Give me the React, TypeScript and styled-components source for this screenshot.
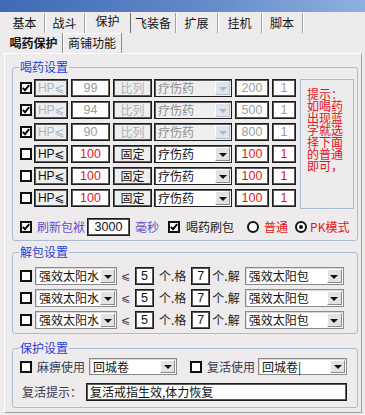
import React from 'react';
import styled, { createGlobalStyle } from 'styled-components';

const GlobalStyle = createGlobalStyle`
  html, body { margin: 0; padding: 0; background: #edebeb; }
  body {
    font-family: "Noto Sans CJK SC", "DejaVu Sans", sans-serif;
    font-size: 12px;
    color: #141414;
  }
`;

const RED = '#e3141c';
const BLUE = '#2441d6';
const PURPLE = '#6a4ccc';

const Window = styled.div`
  width: 365px;
  height: 415px;
  background: #edebeb;
  display: flex;
  flex-direction: column;
  overflow: hidden;
`;

const TitleBar = styled.div`
  height: 12px;
  flex: none;
  background: linear-gradient(90deg, #3f69b4 0%, #6389c8 55%, #8eb0e0 100%);
`;

const TabStrip = styled.div`
  display: flex;
  height: 20px;
  padding: 1px 0 0 5px;
`;

const Tab = styled.div<{ $w: number; $active?: boolean }>`
  width: ${p => p.$w}px;
  box-sizing: border-box;
  display: flex;
  align-items: center;
  justify-content: center;
  line-height: 14px;
  padding-bottom: ${p => (p.$active ? 4 : 0)}px;
  border-right: 1px solid ${p => (p.$active ? '#6e6e6e' : '#a3a3a3')};
  box-shadow: ${p => (p.$active ? 'inset 1px 0 0 #fff' : '1px 0 0 #fff')};
`;

const SubTabStrip = styled.div`
  display: flex;
  height: 20px;
  padding: 0 0 0 5px;
`;

const SubTab = styled(Tab)`
  font-weight: ${p => (p.$active ? 600 : 400)};
  padding-bottom: 0;
  border-right: 1px solid #8d8d8d;
  box-shadow: ${p => (p.$active ? 'none' : 'inset 1px 1px 0 #fff')};
`;

const Page = styled.div`
  flex: 1;
  margin: 0 3px 2px 4px;
  border-top: 1px solid #fff;
  border-left: 1px solid #fff;
  border-right: 1px solid #a0a0a0;
  border-bottom: 1px solid #a0a0a0;
  display: flex;
  flex-direction: column;
`;

const Group = styled.fieldset<{ $top: number; $pt: number; $pb: number }>`
  margin: ${p => p.$top}px 3px 0 7px;
  padding: ${p => p.$pt}px 3px ${p => p.$pb}px 7px;
  border: 1px solid #a9bcd2;
  border-radius: 3px;
  min-width: 0;
`;

const Legend = styled.legend`
  padding: 0 1px;
  margin-left: -1px;
  font-size: 12px;
  line-height: 16px;
  color: ${BLUE};
`;

const DrinkBody = styled.div`
  display: flex;
  gap: 4px;
`;

const RowStack = styled.div`
  display: flex;
  flex-direction: column;
  gap: 4px;
`;

const Row = styled.div<{ $h?: number }>`
  display: flex;
  align-items: center;
  height: ${p => p.$h ?? 18}px;
`;

const Box = styled.div`
  width: 12px;
  height: 12px;
  box-sizing: border-box;
  border: 2px solid #111;
  background: #fff;
  flex: none;
  display: flex;
  align-items: center;
  justify-content: center;
`;

const Check = ({ on }: { on?: boolean }) => (
  <Box>
    {on && (
      <svg width="8" height="8" viewBox="0 0 8 8">
        <path d="M0.8 3.8 L3 6.2 L7.2 1.2" fill="none" stroke="#000" strokeWidth="1.9" />
      </svg>
    )}
  </Box>
);

const Radio = styled.span<{ $on?: boolean }>`
  width: 12px;
  height: 12px;
  box-sizing: border-box;
  border: 2px solid #111;
  border-radius: 50%;
  background: #fff;
  flex: none;
  display: inline-flex;
  align-items: center;
  justify-content: center;
  &::after {
    content: '';
    width: 4px;
    height: 4px;
    border-radius: 50%;
    background: ${p => (p.$on ? '#111' : 'transparent')};
  }
`;

const Field = styled.div<{ $w: number; $ml?: number; $color?: string; $grey?: boolean; $align?: string }>`
  width: ${p => p.$w}px;
  height: 100%;
  margin-left: ${p => p.$ml ?? 0}px;
  box-sizing: border-box;
  flex: none;
  border: 1px solid #1c1c1c;
  box-shadow: inset 0 0 0 1px #5a5a5a;
  background: ${p => (p.$grey ? '#efeeee' : '#fff')};
  color: ${p => p.$color ?? '#111'};
  display: flex;
  align-items: center;
  justify-content: ${p => p.$align ?? 'center'};
  padding: 0 3px;
  line-height: 14px;
  white-space: nowrap;
  font-family: "Liberation Sans", "Noto Sans CJK SC", sans-serif;
  font-size: 12.5px;
`;

const FieldCjk = styled.span`
  font-family: "Noto Sans CJK SC", sans-serif;
  font-size: 12px;
`;

const HpText = styled.span`
  font-family: "Liberation Sans", "DejaVu Sans", sans-serif;
  font-size: 12px;
  letter-spacing: -0.3px;
`;

const Combo = styled.div<{ $w: number; $ml?: number; $off?: boolean; $thick?: boolean }>`
  width: ${p => p.$w}px;
  height: 100%;
  margin-left: ${p => p.$ml ?? 0}px;
  box-sizing: border-box;
  flex: none;
  display: flex;
  align-items: stretch;
  border: 1px solid ${p => (p.$thick ? '#1c1c1c' : '#8a8a8a')};
  box-shadow: ${p => (p.$thick ? 'inset 1px 1px 0 #5a5a5a' : 'inset 1px 1px 0 #d8d8d8')};
  background: ${p => (p.$off ? '#efefef' : '#fff')};
  color: ${p => (p.$off ? '#8e8e8e' : '#111')};
`;

const ComboText = styled.span`
  flex: 1;
  display: flex;
  align-items: center;
  padding-left: 3px;
  line-height: 12px;
  white-space: nowrap;
`;

const ComboBtn = styled.span<{ $off?: boolean }>`
  width: 15px;
  margin: 1px 1px 1px 0;
  flex: none;
  box-sizing: border-box;
  background: ${p => (p.$off ? '#dfe5ec' : '#e2e2e2')};
  border-top: 1px solid #fff;
  border-left: 1px solid #fff;
  border-right: 1px solid ${p => (p.$off ? '#b8c2ce' : '#8a8a8a')};
  border-bottom: 1px solid ${p => (p.$off ? '#b8c2ce' : '#8a8a8a')};
  display: flex;
  align-items: center;
  justify-content: center;
  &::after {
    content: '';
    border-left: 4px solid transparent;
    border-right: 4px solid transparent;
    border-top: 4px solid ${p => (p.$off ? '#a9b7c8' : '#111')};
    margin-top: 1px;
  }
`;

const Label = styled.span<{ $ml?: number; $color?: string }>`
  margin-left: ${p => p.$ml ?? 0}px;
  color: ${p => p.$color ?? '#222'};
  flex: none;
  display: inline-flex;
  align-items: center;
  line-height: 14px;
  white-space: nowrap;
`;

const Leq = styled.span<{ $ml?: number }>`
  margin-left: ${p => p.$ml ?? 0}px;
  width: 12px;
  flex: none;
  font-family: "DejaVu Sans", sans-serif;
  font-size: 11px;
  color: #333;
`;

const Tip = styled.div`
  width: 54px;
  height: 130px;
  box-sizing: border-box;
  border: 1px solid #a9bcd2;
  padding: 8px 0 0 6px;
  color: ${RED};
  font-size: 12px;
  line-height: 12px;
`;

const TipText = styled.div`
  width: 38px;
`;

const BottomRow = styled(Row)`
  margin-top: 9px;
`;

const GapRows = styled.div<{ $gap: number }>`
  display: flex;
  flex-direction: column;
  gap: ${p => p.$gap}px;
`;

type DrinkRow = { on: boolean; value: string; mode: string; limit: string };

const drinkRows: DrinkRow[] = [
  { on: true, value: '99', mode: '比列', limit: '200' },
  { on: true, value: '94', mode: '比列', limit: '500' },
  { on: true, value: '90', mode: '比列', limit: '800' },
  { on: false, value: '100', mode: '固定', limit: '100' },
  { on: false, value: '100', mode: '固定', limit: '100' },
  { on: false, value: '100', mode: '固定', limit: '100' },
];

const tabs = [
  { t: '基本', w: 40 },
  { t: '战斗', w: 40 },
  { t: '保护', w: 46, active: true },
  { t: '飞装备', w: 45 },
  { t: '扩展', w: 42 },
  { t: '挂机', w: 44 },
  { t: '脚本', w: 41 },
];

export default function App() {
  return (
    <>
      <GlobalStyle />
      <Window>
        <TitleBar />
        <TabStrip>
          {tabs.map(t => (
            <Tab key={t.t} $w={t.w} $active={t.active}>{t.t}</Tab>
          ))}
        </TabStrip>
        <SubTabStrip>
          <SubTab $w={58} $active>喝药保护</SubTab>
          <SubTab $w={59}>商铺功能</SubTab>
        </SubTabStrip>
        <Page>
          <Group $top={5} $pt={4} $pb={4}>
            <Legend>喝药设置</Legend>
            <DrinkBody>
              <RowStack>
                {drinkRows.map((r, i) => {
                  const off = r.on;
                  return (
                    <Row key={i}>
                      <Check on={r.on} />
                      <Field $w={34} $ml={2} $grey $color={off ? '#a6b5cc' : '#111'}>
                        <HpText>HP⩽</HpText>
                      </Field>
                      <Field $w={39} $ml={3} $color={off ? '#9c9c9c' : RED}>{r.value}</Field>
                      <Field $w={39} $ml={3} $grey $color={off ? '#a9b2c2' : '#111'}>
                        <FieldCjk>{r.mode}</FieldCjk>
                      </Field>
                      <Combo $w={78} $ml={2} $off={off} $thick>
                        <ComboText>疗伤药</ComboText>
                        <ComboBtn $off={off} />
                      </Combo>
                      <Field $w={34} $ml={3} $color={off ? '#9c9c9c' : RED}>{r.limit}</Field>
                      <Field $w={24} $ml={3} $color={off ? '#9c9c9c' : RED}>1</Field>
                    </Row>
                  );
                })}
              </RowStack>
              <Tip>
                <TipText>提示：如喝药出现蓝字就选择下面的普通即可，</TipText>
              </Tip>
            </DrinkBody>
            <BottomRow>
              <Check on />
              <Label $ml={5} $color={PURPLE}>刷新包袱</Label>
              <Field $w={43} $ml={2}>3000</Field>
              <Label $ml={5} $color={PURPLE}>毫秒</Label>
              <Label $ml={9}><Check on /></Label>
              <Label $ml={6}>喝药刷包</Label>
              <Label $ml={13}><Radio /></Label>
              <Label $ml={5} $color={RED}>普通</Label>
              <Label $ml={7}><Radio $on /></Label>
              <Label $ml={3} $color={RED}>PK模式</Label>
            </BottomRow>
          </Group>

          <Group $top={3} $pt={7} $pb={4}>
            <Legend>解包设置</Legend>
            <GapRows $gap={4}>
              {[0, 1, 2].map(i => (
                <Row key={i}>
                  <Check />
                  <Combo $w={82} $ml={3}>
                    <ComboText>强效太阳水</ComboText>
                    <ComboBtn />
                  </Combo>
                  <Leq $ml={4}>⩽</Leq>
                  <Field $w={19} $ml={2}>5</Field>
                  <Label $ml={5}>个.格</Label>
                  <Field $w={19} $ml={5}>7</Field>
                  <Label $ml={2}>个.解</Label>
                  <Combo $w={99} $ml={5}>
                    <ComboText>强效太阳包</ComboText>
                    <ComboBtn />
                  </Combo>
                </Row>
              ))}
            </GapRows>
          </Group>

          <Group $top={6} $pt={2} $pb={6}>
            <Legend>保护设置</Legend>
            <GapRows $gap={8}>
              <Row $h={17}>
                <Check />
                <Label $ml={5} $color="#3a3a55">麻痹使用</Label>
                <Combo $w={88} $ml={4}>
                  <ComboText>回城卷</ComboText>
                  <ComboBtn />
                </Combo>
                <Label $ml={13}><Check /></Label>
                <Label $ml={5} $color="#3a3a55">复活使用</Label>
                <Combo $w={89} $ml={3}>
                  <ComboText>回城卷|</ComboText>
                  <ComboBtn />
                </Combo>
              </Row>
              <Row>
                <Label $ml={2} $color="#3a3a55">复活提示：</Label>
                <Field $w={261} $ml={4} $align="flex-start">
                  <FieldCjk>复活戒指生效,体力恢复</FieldCjk>
                </Field>
              </Row>
            </GapRows>
          </Group>
        </Page>
      </Window>
    </>
  );
}
